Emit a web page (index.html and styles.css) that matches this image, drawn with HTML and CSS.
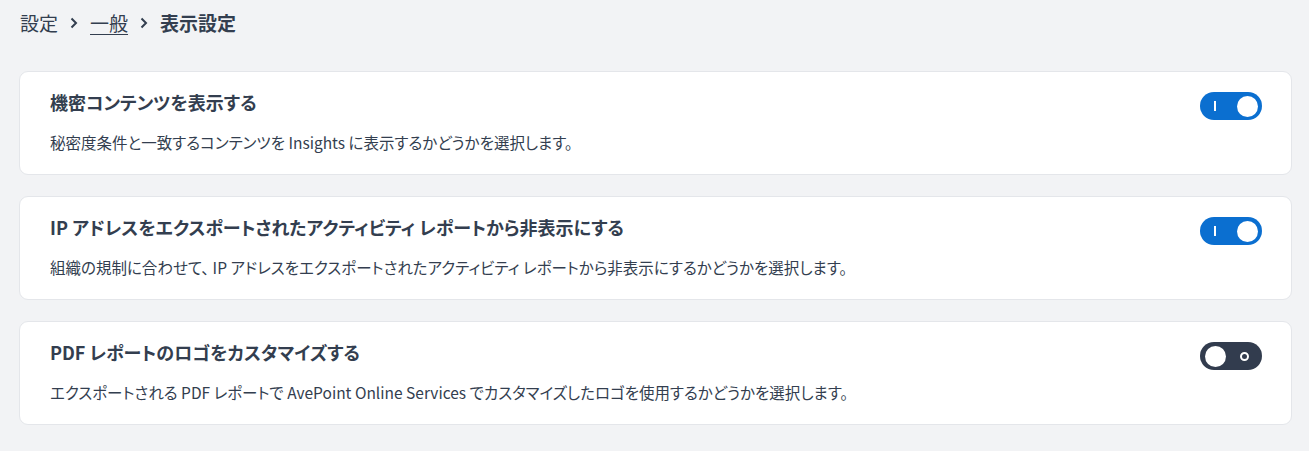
FILE: index.html
```html
<!DOCTYPE html>
<html lang="ja">
<head>
<meta charset="utf-8">
<link rel="stylesheet" href="styles.css">
</head>
<body>
<div class="page">
  <nav class="crumbs">
    <span class="crumb">設定</span>
    <svg class="sep" width="10" height="14" viewBox="0 0 10 14"><path d="M2.5 2.5 L7 7 L2.5 11.5" fill="none" stroke="#333e4f" stroke-width="2"/></svg>
    <a class="crumb link">一般</a>
    <svg class="sep" width="10" height="14" viewBox="0 0 10 14"><path d="M2.5 2.5 L7 7 L2.5 11.5" fill="none" stroke="#333e4f" stroke-width="2"/></svg>
    <span class="crumb current">表示設定</span>
  </nav>

  <div class="cards">
    <section class="card">
      <div class="text">
        <h2 class="title">機密コンテンツを表示する</h2>
        <p class="desc">秘密度条件と一致するコンテンツを Insights に表示するかどうかを選択します。</p>
      </div>
      <div class="toggle on"><span class="bar"></span><span class="knob"></span></div>
    </section>

    <section class="card">
      <div class="text">
        <h2 class="title">IP アドレスをエクスポートされたアクティビティ レポートから非表示にする</h2>
        <p class="desc">組織の規制に合わせて、 IP アドレスをエクスポートされたアクティビティ レポートから非表示にするかどうかを選択します。</p>
      </div>
      <div class="toggle on"><span class="bar"></span><span class="knob"></span></div>
    </section>

    <section class="card">
      <div class="text">
        <h2 class="title">PDF レポートのロゴをカスタマイズする</h2>
        <p class="desc">エクスポートされる PDF レポートで AvePoint Online Services でカスタマイズしたロゴを使用するかどうかを選択します。</p>
      </div>
      <div class="toggle off"><span class="knob"></span><span class="ring"></span></div>
    </section>
  </div>
</div>
</body>
</html>
```

FILE: styles.css
```css
* { box-sizing: border-box; }
html, body {
  margin: 0;
  padding: 0;
  background: #f2f3f5;
}
body {
  font-family: "Noto Sans CJK JP", "Noto Sans", sans-serif;
  color: #333e4f;
  font-feature-settings: "palt";
}
.page {
  padding: 9px 17px 0 19px;
}
.crumbs {
  display: flex;
  align-items: center;
  gap: 11px;
  height: 28px;
  font-size: 19px;
  line-height: 28px;
  padding-left: 1px;
}
.crumb { color: #333e4f; }
.link {
  text-decoration: underline;
  text-underline-offset: 3px;
  text-decoration-thickness: 1px;
}
.current { font-weight: 700; }
.sep { display: block; }
.cards {
  display: flex;
  flex-direction: column;
  gap: 21px;
  margin-top: 34px;
}
.card {
  background: #fff;
  border: 1px solid #e4e6ea;
  border-radius: 9px;
  display: flex;
  justify-content: space-between;
  align-items: flex-start;
  padding: 17px 29px 17px 30px;
  height: 104px;
}
.text {
  display: flex;
  flex-direction: column;
  gap: 15px;
}
.title {
  margin: 0;
  font-size: 18px;
  font-weight: 700;
  line-height: 26px;
}
.desc {
  margin: 0;
  font-size: 15.5px;
  line-height: 24px;
  font-weight: 400;
}
.toggle {
  flex: none;
  width: 62px;
  height: 28px;
  border-radius: 14px;
  margin-top: 3px;
  display: flex;
  align-items: center;
  justify-content: space-between;
}
.toggle.on {
  background: #0b6fd0;
  padding: 0 4px 0 14px;
}
.toggle.off {
  background: #323c4e;
  padding: 0 13px 0 5px;
}
.bar {
  width: 2px;
  height: 10px;
  background: #fff;
}
.knob {
  width: 21px;
  height: 21px;
  border-radius: 50%;
  background: #fff;
}
.ring {
  width: 9px;
  height: 9px;
  border-radius: 50%;
  border: 2px solid #fff;
}
```
